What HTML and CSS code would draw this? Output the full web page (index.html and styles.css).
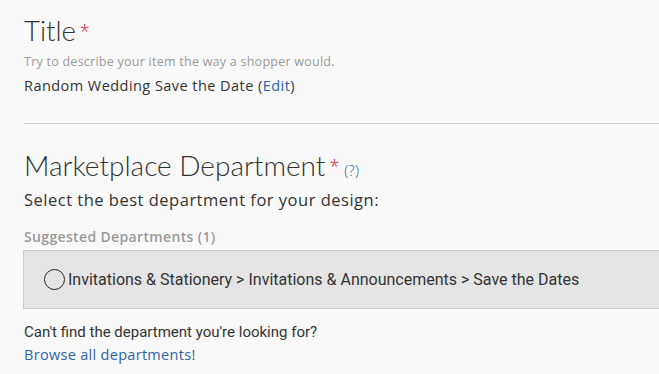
FILE: index.html
```html
<!DOCTYPE html>
<html lang="en">
<head>
    <meta charset="UTF-8">
    <title>Product Details</title>
    <link rel="stylesheet" href="styles.css">
</head>
<body>
    <section class="field">
        <h2 class="field-title">Title<span class="req">*</span></h2>
        <p class="hint">Try to describe your item the way a shopper would.</p>
        <p class="value">Random Wedding Save the Date (<a href="#">Edit</a>)</p>
    </section>

    <hr class="divider">

    <section class="field">
        <h2 class="field-title">Marketplace Department<span class="req">*</span><a class="help" href="#">(?)</a></h2>
        <p class="lead">Select the best department for your design:</p>
        <p class="suggested">Suggested Departments (1)</p>
        <label class="option">
            <input type="radio" name="dept">
            <span class="radio"></span>
            Invitations &amp; Stationery &gt; Invitations &amp; Announcements &gt; Save the Dates
        </label>
        <p class="missing">Can't find the department you're looking for?</p>
        <p class="value browse"><a href="#">Browse all departments!</a></p>
    </section>
</body>
</html>
```

FILE: styles.css
```css
body {
    background-color: #f9f9f9;
    color: #333;
    font-family: 'Open Sans', sans-serif;
    margin: 0;
    padding: 0 0 0 24px;
    overflow: hidden;
}

a {
    color: #2f62a8;
    text-decoration: none;
}

p {
    margin: 0;
}

.field-title {
    font-family: 'Lato', sans-serif;
    font-size: 27.5px;
    font-weight: 300;
    margin: 0;
    line-height: 32px;
    color: #333;
}

.field + .divider + .field .field-title {
    font-size: 28px;
}

.req {
    font-family: 'Open Sans', sans-serif;
    color: #c8102e;
    font-size: 18px;
    line-height: 1;
    vertical-align: 3px;
    margin-left: 4px;
}

.help {
    font-family: 'Open Sans', sans-serif;
    font-size: 14.5px;
    line-height: 1;
    letter-spacing: 0.3px;
    margin-left: 5px;
}

.field:first-child {
    padding-top: 15px;
}

.hint {
    font-size: 12.5px;
    letter-spacing: 0.25px;
    color: #999;
    margin-top: 6px;
}

.value {
    font-size: 14.5px;
    letter-spacing: 0.45px;
    margin-top: 6px;
}

.divider {
    border: none;
    border-top: 1px solid #ccc;
    margin: 28px -40px 25px 0;
}

.lead {
    font-size: 16.5px;
    letter-spacing: 0.5px;
    margin-top: 6.5px;
}

.suggested {
    font-size: 14px;
    font-weight: 600;
    letter-spacing: 0.35px;
    color: #9a9a9a;
    margin-top: 16px;
}

.option {
    display: flex;
    align-items: center;
    gap: 3px;
    margin: 4px -40px 0 -1px;
    height: 57px;
    padding-left: 20px;
    background: #e5e5e5;
    border: 1px solid #ccc;
    font-family: 'Roboto', sans-serif;
    font-size: 16px;
    color: #333;
}

.option input {
    display: none;
}

.radio {
    width: 21px;
    height: 21px;
    border: 1.5px solid #222;
    border-radius: 50%;
    box-sizing: border-box;
}

.missing {
    font-family: 'Roboto', sans-serif;
    font-size: 15px;
    margin-top: 14.5px;
}

.browse {
    margin-top: 4px;
    letter-spacing: 0.3px;
}
```
